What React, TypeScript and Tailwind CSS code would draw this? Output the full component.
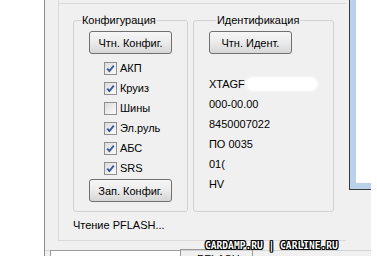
import React from "react";

function Check({ on, label }: { on: boolean; label: string }) {
  return (
    <div className="h-[20px] flex items-center pl-[30px]">
      <span className="w-[13px] h-[13px] border border-[#8f8f8f] bg-gradient-to-br from-[#dcdcdc] to-[#fbfbfb] flex items-center justify-center">
        {on && (
          <svg width="9" height="9" viewBox="0 0 9 9">
            <path d="M1.2 4.6 L3.4 7 L7.8 1.6" fill="none" stroke="#3b5a9a" strokeWidth="1.9" />
          </svg>
        )}
      </span>
      <span className="ml-[3px]">{label}</span>
    </div>
  );
}

function Btn({ children }: { children: React.ReactNode }) {
  return (
    <div className="w-[83px] h-[23px] border border-[#707070] rounded-[3px] bg-gradient-to-b from-[#f6f6f6] via-[#ebebeb] to-[#d6d6d6] flex items-center justify-center">
      {children}
    </div>
  );
}

export default function App() {
  const ident = ["000-00.00", "8450007022", "ПО 0035", "01(", "HV"];
  return (
    <div className="relative w-[377px] h-[256px] overflow-hidden flex bg-white text-[11px] leading-[14px] text-black font-['Liberation_Sans',Arial,sans-serif]">
      <div className="w-[44px] bg-white" />
      <div className="w-[327px] h-full bg-[#f0f0f0] border-l border-[#8c8c8c] flex flex-col">
        <div className="flex items-start">
          <div className="w-[13px]" />
          {/* outer frame */}
          <div className="w-[290px] h-[241px] border-l border-b border-[#d9d9d9] flex flex-col">
            <div className="mt-[3px] h-px bg-[#d9d9d9]" />
            <div className="flex mt-[9px] ml-[14px] gap-[5px]">
              <fieldset className="w-[115px] h-[199px] border border-[#d2d2d2] rounded-[3px] flex flex-col items-center">
                <legend className="ml-[7px] px-[1px] leading-[14px]">Конфигурация</legend>
                <div className="mt-[4px]">
                  <Btn>Чтн. Конфиг.</Btn>
                </div>
                <div className="self-stretch mt-[4px]">
                  <Check on label="АКП" />
                  <Check on label="Круиз" />
                  <Check on={false} label="Шины" />
                  <Check on label="Эл.руль" />
                  <Check on label="АБС" />
                  <Check on label="SRS" />
                </div>
                <div className="mt-[1px]">
                  <Btn>Зап. Конфиг.</Btn>
                </div>
              </fieldset>
              <fieldset className="w-[141px] h-[199px] border border-[#d2d2d2] rounded-[3px] flex flex-col pl-[15px]">
                <legend className="ml-[7px] px-[1px] leading-[14px]">Идентификация</legend>
                <div className="mt-[4px]">
                  <Btn>Чтн. Идент.</Btn>
                </div>
                <div className="mt-[19px] h-[21px] flex items-center relative">
                  XTAGF
                  <span className="absolute left-[37px] top-[4px] w-[72px] h-[14px] rounded-full bg-white [filter:blur(1px)]" />
                </div>
                {ident.map((t) => (
                  <div key={t} className="h-[20px] flex items-center">
                    {t}
                  </div>
                ))}
              </fieldset>
            </div>
            <div className="ml-[14px] mt-[6px] h-[14px]">Чтение PFLASH...</div>
          </div>
          <div className="w-[3px]" />
          {/* text box edge */}
          <div className="w-[22px] h-[190px] border-l border-b border-[#3a3a3a] bg-[#b9d1ea] pl-[6px] pb-[6px]">
            <div className="w-full h-full bg-white" />
          </div>
        </div>
        {/* status bar */}
        <div className="mt-[9px] flex border-t border-[#d4d4d4] flex-1">
          <div className="w-[5px]" />
          <div className="w-[130px] bg-white border-l border-[#9a9a9a] -mt-px border-t" />
          <div className="w-[73px] border-l border-r border-[#9a9a9a] -mt-[2px] border-t pl-[16px] pt-[2px]">
            PFLASH
          </div>
        </div>
      </div>
      <div className="flex-1 bg-white" />
      <div className="absolute left-[205px] top-[241px] text-white font-bold font-['DejaVu_Sans_Mono',monospace] text-[9.6px] leading-[10px] tracking-[0px] [text-shadow:1px_0_0_#000,-1px_0_0_#000,0_1px_0_#000,0_-1px_0_#000,1px_1px_0_#000,-1px_-1px_0_#000,1px_-1px_0_#000,-1px_1px_0_#000]">
        CARDAMP.RU | CARLINE.RU
      </div>
    </div>
  );
}
